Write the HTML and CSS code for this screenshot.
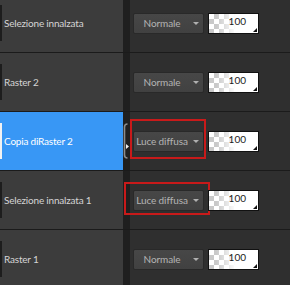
FILE: index.html
```html
<!DOCTYPE html>
<html lang="it">
<head>
    <meta charset="UTF-8">
    <title>Livelli</title>
    <link rel="stylesheet" href="styles.css">
</head>
<body>
<div class="layers">
    <div class="row">
        <div class="name"><span class="mark"></span>Selezione innalzata</div>
        <div class="gutter"></div>
        <div class="props">
            <div class="blend">Normale<span class="arrow"></span></div>
            <div class="opacity">100</div>
        </div>
    </div>
    <div class="row">
        <div class="name"><span class="mark"></span>Raster 2</div>
        <div class="gutter"></div>
        <div class="props">
            <div class="blend">Normale<span class="arrow"></span></div>
            <div class="opacity">100</div>
        </div>
    </div>
    <div class="row selected">
        <div class="name"><span class="mark"></span>Copia diRaster 2</div>
        <div class="gutter">
            <svg class="handle" width="7" height="58" viewBox="0 0 7 58">
                <path d="M4.5 12 Q1.5 12 1.5 15 V43 Q1.5 46 4.5 46" fill="none" stroke="#8c8c8c" stroke-width="1.6"/>
                <path d="M3 32 L6 34.5 L3 37 Z" fill="#f0f0f0"/>
            </svg>
        </div>
        <div class="props">
            <div class="blend">Luce diffusa<span class="arrow"></span><span class="note note-a"></span></div>
            <div class="opacity">100</div>
        </div>
    </div>
    <div class="row">
        <div class="name"><span class="mark"></span>Selezione innalzata 1</div>
        <div class="gutter"></div>
        <div class="props">
            <div class="blend">Luce diffusa<span class="arrow"></span><span class="note note-b"></span></div>
            <div class="opacity">100</div>
        </div>
    </div>
    <div class="row">
        <div class="name"><span class="mark"></span>Raster 1</div>
        <div class="gutter"></div>
        <div class="props">
            <div class="blend">Normale<span class="arrow"></span></div>
            <div class="opacity">100</div>
        </div>
    </div>
</div>
</body>
</html>
```

FILE: styles.css
```css
body {
    margin: 0;
    background-color: #2f2f2f;
    font-family: Lato, "Noto Sans", sans-serif;
    overflow: hidden;
}
.layers {
    margin-top: -6px;
}
.row {
    display: grid;
    grid-template-columns: 123px 7px 1fr;
    height: 58px;
    border-bottom: 1px solid #1b1b1b;
}
.name {
    background-color: #3c3c3c;
    color: #d4d4d4;
    font-size: 10px;
    letter-spacing: -0.2px;
    display: flex;
    align-items: center;
    gap: 2px;
    white-space: nowrap;
}
.mark {
    width: 2px;
    height: 36px;
    background-color: #1d1d1d;
}
.selected .name {
    background-color: #3897f5;
    color: #fff;
}
.selected .mark {
    background-color: #f2f2f2;
}
.gutter {
    background-color: #1f1f1f;
}
.handle {
    display: block;
}
.props {
    display: flex;
    align-items: center;
    gap: 4px;
    padding-left: 3px;
}
.blend {
    position: relative;
    box-sizing: border-box;
    width: 71px;
    height: 21px;
    padding-right: 13px;
    background: linear-gradient(#474747, #414141);
    border: 1px solid #292929;
    border-radius: 2px;
    color: #b4b4b4;
    font-size: 10px;
    letter-spacing: -0.1px;
    white-space: nowrap;
    display: flex;
    align-items: center;
    justify-content: center;
}
.arrow {
    position: absolute;
    right: 4px;
    top: 8px;
    border-left: 3px solid transparent;
    border-right: 3px solid transparent;
    border-top: 3px solid #b0b0b0;
}
.note {
    position: absolute;
    border: 2px solid #c81a1a;
}
.note-a {
    left: -4px;
    right: -3px;
    top: -13px;
    bottom: -8px;
}
.note-b {
    left: -10px;
    right: -7px;
    top: -9px;
    bottom: -5px;
}
.opacity {
    position: relative;
    box-sizing: border-box;
    width: 51px;
    height: 21px;
    border: 1px solid #111;
    background:
        linear-gradient(to right, rgba(255, 255, 255, 0) 15%, #fff 55%),
        conic-gradient(#c9c9c9 25%, #fff 0 50%, #c9c9c9 0 75%, #fff 0) 0 0 / 10px 10px;
    color: #1c1c1c;
    font-size: 10px;
    line-height: 12px;
    text-align: right;
    padding: 1px 12px 0 0;
}
.opacity::after {
    content: "";
    position: absolute;
    right: 1px;
    bottom: 1px;
    border-left: 4px solid transparent;
    border-bottom: 4px solid #111;
}
```
